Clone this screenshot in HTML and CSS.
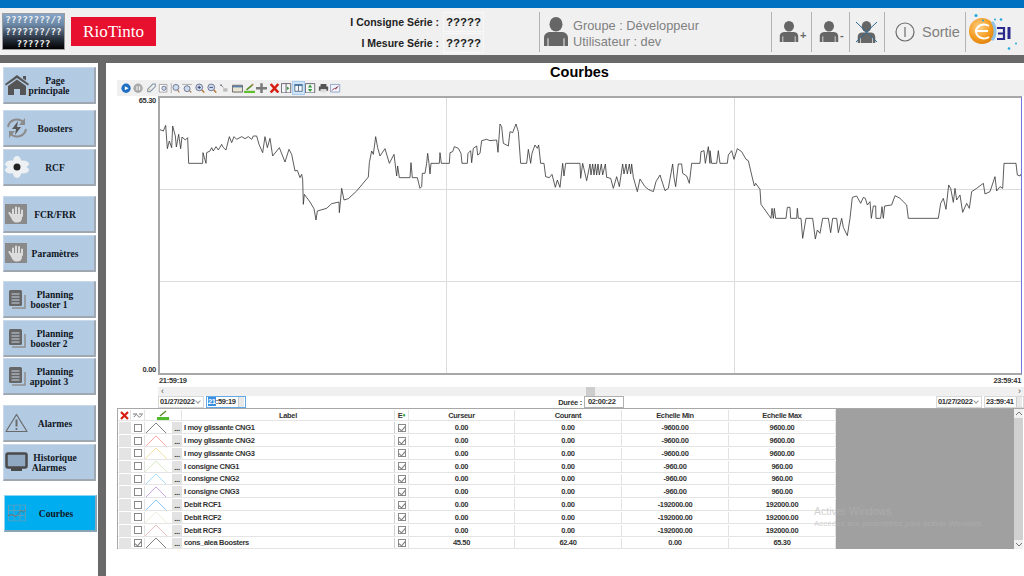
FILE: index.html
```html
<!DOCTYPE html>
<html lang="fr">
<head>
<meta charset="utf-8">
<title>Courbes</title>
<link rel="stylesheet" href="styles.css">
</head>
<body>
<svg class="defs" width="0" height="0" aria-hidden="true">
  <defs>
    <symbol id="person" viewBox="0 0 26 26" preserveAspectRatio="none">
      <circle cx="13" cy="6.500" r="6.500"/>
      <path d="M1 26v-7c0-4 3-5.500 7-5.500h10c4 0 7 1.500 7 5.500v7h-3.500v-7h-1v7h-15v-7h-1v7z"/>
    </symbol>
    <symbol id="hand" viewBox="0 0 22 20">
      <rect width="22" height="20" fill="#8a8a8a"/>
      <path fill="#dcdcdc" d="M6 10h11v4c0 3-2 4.500-5 4.500-3.500 0-4.500-1.500-6-5L3.500 9.500c-.6-1.300 1-2 1.800-1L7 11z"/>
      <path stroke="#dcdcdc" stroke-width="2" stroke-linecap="round" d="M8 11V5.500M11 11V3.500M14 11V4M17 12V6.500"/>
    </symbol>
    <symbol id="doc" viewBox="0 0 18 20">
      <path fill="none" stroke="#8f8f8f" stroke-width="1.500" d="M4 19h13V6"/>
      <rect x="1" y="1" width="13" height="16" rx="1.500" fill="#666"/>
      <path stroke="#c6d4e4" stroke-width="1.200" d="M3.500 5h8M3.500 8h8M3.500 11h8M3.500 14h8"/>
    </symbol>
    <symbol id="peak" viewBox="0 0 22 13" preserveAspectRatio="none">
      <path fill="none" stroke="currentColor" stroke-width=".8" d="M0 13 11 1l11 12"/>
    </symbol>
    <symbol id="chev" viewBox="0 0 8 5">
      <path fill="none" stroke="#777" d="M1 4l3-3 3 3"/>
    </symbol>
  </defs>
</svg>

<div class="topbar"></div>

<header class="header">
  <div class="lang">????????/?<br>???????/??<br>??????</div>
  <div class="riotinto">RioTinto</div>
  <div class="readouts">
    <div class="readout"><span class="readout-label">I Consigne Série :</span><span class="readout-value">?????</span></div>
    <div class="readout"><span class="readout-label">I Mesure Série :</span><span class="readout-value">?????</span></div>
  </div>
  <div class="user sep">
    <svg class="user-icon" width="26" height="29"><use href="#person" width="26" height="29"/></svg>
    <div class="user-text">Groupe : Développeur<br>Utilisateur : dev</div>
  </div>
  <div class="tool tool-add sep"><svg class="small-person" width="20" height="21"><use href="#person" width="20" height="21"/></svg><span class="sign">+</span></div>
  <div class="tool tool-rem sep"><svg class="small-person" width="20" height="21"><use href="#person" width="20" height="21"/></svg><span class="sign">-</span></div>
  <div class="tool tool-del sep">
    <svg width="21" height="24" viewBox="0 0 21 24"><use href="#person" class="gray-fill" x="1" y="1" width="19" height="22"/><path stroke="#2a6a96" stroke-width="1" d="M0 2l21 20M21 2 0 22"/></svg>
  </div>
  <div class="exit sep">
    <svg width="20" height="20" viewBox="0 0 20 20"><circle cx="10" cy="10" r="9" fill="none" stroke="#6b6b6b" stroke-width="1.200"/><path stroke="#6b6b6b" stroke-width="1.200" d="M10 5v10"/></svg>
    <span>Sortie</span>
  </div>
  <div class="edi sep">
    <svg width="58" height="44" viewBox="0 0 58 44">
      <defs><radialGradient id="orb" cx=".4" cy=".35" r=".75"><stop offset="0" stop-color="#ffd38a"/><stop offset=".6" stop-color="#f39a1f"/><stop offset="1" stop-color="#d97a08"/></radialGradient></defs>
      <circle cx="16" cy="21" r="13" fill="url(#orb)"/>
      <path fill="none" stroke="#fff" stroke-width="2" d="M23 16a8 7 0 1 0 0 11M9 21h13"/>
      <path fill="none" stroke="#8fc4e8" stroke-width="3" d="M26 12c4 4 4 14 0 18"/>
      <path fill="none" stroke="#2b2a8c" stroke-width="2.200" d="M31 18h7v11h-7M32 23.500h5"/>
      <path stroke="#2b2a8c" stroke-width="3" d="M43 17v12"/>
      <g fill="#21a6e0"><circle cx="10" cy="5.500" r="1.500"/><circle cx="17" cy="10.500" r="1"/><circle cx="29" cy="9.500" r="1"/><circle cx="35" cy="9.500" r="1.300"/><circle cx="43" cy="38.500" r="1.300"/><circle cx="50" cy="33.500" r="1"/></g>
    </svg>
  </div>
</header>

<div class="content">
  <nav class="sidebar">
    <a class="nav">
      <svg class="nav-icon" width="24" height="20" viewBox="0 0 24 20"><path fill="#555" d="M12 0 24 9l-1 1.500L12 3 1 10.500 0 9zM3 11l9-6.500 9 6.500v9h-6v-6H9v6H3zM18 1h3v4.500l-3-2z"/></svg>
      <span class="nav-text"><span>Page</span><span class="line2">principale</span></span>
    </a>
    <a class="nav gap-a">
      <svg class="nav-icon" width="24" height="22" viewBox="0 0 24 22"><path fill="none" stroke="#8b8b8b" stroke-width="2" d="M3 10a9 9 0 0 1 16-4M21 12a9 9 0 0 1-16 4"/><path fill="#8b8b8b" d="M20 1v7h-6zM4 21v-7h6z"/><path fill="#5a5a5a" d="M13 4 7 12h4l-1 6 6-8h-4z"/></svg>
      <span class="nav-text"><span>Boosters</span></span>
    </a>
    <a class="nav gap-b">
      <svg class="nav-icon" width="24" height="22" viewBox="0 0 24 22"><g fill="#eef1f4"><ellipse cx="12" cy="5" rx="4" ry="5"/><ellipse cx="12" cy="17" rx="4" ry="5"/><ellipse cx="6" cy="8" rx="6" ry="3.500"/><ellipse cx="18" cy="8" rx="6" ry="3.500"/><ellipse cx="6" cy="14" rx="6" ry="3.500"/><ellipse cx="18" cy="14" rx="6" ry="3.500"/></g><circle cx="12" cy="11" r="3.500" fill="#222"/></svg>
      <span class="nav-text"><span>RCF</span></span>
    </a>
    <a class="nav gap-c">
      <svg class="nav-icon" width="22" height="20"><use href="#hand" width="22" height="20"/></svg>
      <span class="nav-text"><span>FCR/FRR</span></span>
    </a>
    <a class="nav gap-b">
      <svg class="nav-icon" width="22" height="20"><use href="#hand" width="22" height="20"/></svg>
      <span class="nav-text"><span>Paramètres</span></span>
    </a>
    <a class="nav gap-d">
      <svg class="nav-icon doc-icon" width="18" height="20"><use href="#doc" width="18" height="20"/></svg>
      <span class="nav-text"><span>Planning</span><span class="line2">booster 1</span></span>
    </a>
    <a class="nav gap-b">
      <svg class="nav-icon doc-icon" width="18" height="20"><use href="#doc" width="18" height="20"/></svg>
      <span class="nav-text"><span>Planning</span><span class="line2">booster 2</span></span>
    </a>
    <a class="nav gap-e">
      <svg class="nav-icon doc-icon" width="18" height="20"><use href="#doc" width="18" height="20"/></svg>
      <span class="nav-text"><span>Planning</span><span class="line2">appoint 3</span></span>
    </a>
    <a class="nav gap-c">
      <svg class="nav-icon" width="23" height="19" viewBox="0 0 23 19"><path fill="none" stroke="#6a6a6a" stroke-width="1.200" stroke-linejoin="round" d="M11.500 1 22 18H1z"/><path stroke="#6a6a6a" stroke-width="2" d="M11.500 6v7"/><circle cx="11.500" cy="15.500" r="1.100" fill="#6a6a6a"/></svg>
      <span class="nav-text"><span>Alarmes</span></span>
    </a>
    <a class="nav gap-b">
      <svg class="nav-icon" width="23" height="20" viewBox="0 0 23 20"><rect x="1.500" y="1.500" width="20" height="14" rx="1.500" fill="#90a8c2" stroke="#4a4a4a" stroke-width="2.500"/><path fill="#4a4a4a" d="M6 16h11v3H6z"/></svg>
      <span class="nav-text"><span>Historique</span><span class="line2">Alarmes</span></span>
    </a>
    <a class="nav nav-active">
      <svg class="nav-icon curve-icon" width="18" height="17" viewBox="0 0 18 17"><path fill="none" stroke="#5f9dbd" stroke-width="1" d="M.5.500h17v16H.5zM6 .5v16M12 .5v16M.5 6h17M.5 11h17"/><path fill="none" stroke="#666" stroke-width=".8" d="M0 11l4-1 4 2 5-6 2 2 3-3"/></svg>
      <span class="nav-text"><span>Courbes</span></span>
    </a>
  </nav>

  <main class="main">
    <h1 class="title">Courbes</h1>
    <div class="toolbar">
      <svg viewBox="0 0 13 12"><circle cx="6" cy="6" r="5.500" fill="#1f6fc4"/><path fill="#fff" d="M4.500 3.500 9 6 4.500 8.500z"/></svg>
      <svg viewBox="0 0 13 12"><circle cx="6" cy="6" r="5.500" fill="#a9a9a9"/><path fill="#eee" d="M4 3.500h1.500v5H4zM7 3.500h1.500v5H7z"/></svg>
      <svg viewBox="0 0 13 12"><path fill="none" stroke="#7f93a8" stroke-width="1.200" d="M2 10h3l6-6V1H8L2 7z"/><path stroke="#d4a83a" d="M3 9l2-2"/></svg>
      <svg viewBox="0 0 13 12"><path fill="#fff" stroke="#9a9a9a" d="M1.500 1.500h9v9h-9z"/><circle cx="7" cy="6" r="2.500" fill="#cde" stroke="#668"/></svg>
      <svg viewBox="0 0 13 12"><path stroke="#a9a9a9" d="M1.500 0v12"/><circle cx="7" cy="5" r="3.500" fill="#cde" stroke="#668"/><path stroke="#a86" stroke-width="1.500" d="M9 8l2 3"/></svg>
      <svg viewBox="0 0 13 12"><path stroke="#a9a9a9" d="M0 1.500h12"/><circle cx="6" cy="6.500" r="3.500" fill="#cde" stroke="#668"/><path stroke="#a86" stroke-width="1.500" d="M9 9l2 2"/></svg>
      <svg viewBox="0 0 13 12"><circle cx="5" cy="5" r="4" fill="#cde" stroke="#668"/><path stroke="#b73" stroke-width="1.800" d="M8 8l3 3"/><path stroke="#336" d="M3 5h4M5 3v4"/></svg>
      <svg viewBox="0 0 13 12"><circle cx="5" cy="5" r="4" fill="#cde" stroke="#668"/><path stroke="#b73" stroke-width="1.800" d="M8 8l3 3"/><path stroke="#336" d="M3 5h4"/></svg>
      <svg viewBox="0 0 13 12"><path stroke="#667" d="M2 2l3 3M3 2H2v1"/><path fill="#bbb" d="M5 6h5v4H5z"/></svg>
      <svg viewBox="0 0 13 12"><path fill="#e8e4d4" stroke="#555" d="M.5 2.500h12v8H.5z"/><path fill="#5b7fa8" d="M1 3h11v2H1z"/></svg>
      <svg viewBox="0 0 13 12"><path fill="#5fbf2e" d="M0 9h13v3H0z"/><path stroke="#5a8f2a" stroke-width="1.800" d="M3 8 10 2"/><path stroke="#a85" stroke-width="1.500" d="M9 3l2-2"/></svg>
      <svg viewBox="0 0 13 12"><path fill="#7a7a7a" d="M5 0h3v4.500h5v3H8V12H5V7.500H0v-3h5z"/></svg>
      <svg viewBox="0 0 13 12"><path stroke="#d81e12" stroke-width="3" d="M2 1l9 10M11 1 2 11"/></svg>
      <svg viewBox="0 0 13 12"><path fill="#f4f4f4" stroke="#556" d="M.5.500h11v11H.5z"/><path stroke="#556" d="M6 .5v11"/><path fill="#3a9a3a" d="M7 4l3 2-3 2z"/></svg>
      <svg class="tool-on" viewBox="0 0 15 14"><path fill="#f4f8fc" stroke="#34506e" d="M2.500 2.500h10v9h-10z"/><path fill="#3d6fa0" d="M2 2h11v2H2z"/><path stroke="#34506e" d="M7.500 3v8"/></svg>
      <svg viewBox="0 0 13 12"><path fill="#f4f4f4" stroke="#556" d="M.5.500h11v11H.5z"/><path fill="#2f9a3a" d="M6 1.500 8.500 5h-5zM6 10.500 3.500 7h5z"/></svg>
      <svg viewBox="0 0 13 12"><path fill="#555" d="M3 1h7v3H3zM1 4h11v5H1z"/><path fill="#ddd" d="M3 7h7v4H3z"/></svg>
      <svg viewBox="0 0 13 12"><path fill="#eef2fa" stroke="#8a9cc4" d="M.5 1.500h11v9h-11z"/><path stroke="#d0627a" d="M2 9l3-3 2 1 3-4"/></svg>
    </div>

    <div class="chart-row">
      <div class="y-axis"><span>65.30</span><span>0.00</span></div>
      <div class="chart">
        <svg class="plot" width="861" height="275" viewBox="160 98 861 275" aria-hidden="true">
          <path class="grid" d="M159 189.500h862M159 281.500h862M446.500 97v277M734.500 97v277"/>
          <g transform="translate(110 76) scale(.33333)">
            <polyline class="trace" points="147,160 160,165 167,148 172,218 178,195 185,215 188,150 196,180 199,213 206,175 212,218 216,183 226,192 233,185 236,262 278,262 279,230 288,262 290,230 300,225 305,215 310,225 318,212 325,222 335,205 340,215 348,222 358,182 365,200 372,182 380,190 395,182 405,188 415,182 425,190 430,180 440,180 447,205 458,230 465,182 472,215 480,187 488,240 508,215 525,258 537,220 545,235 555,285 562,283 570,305 575,295 578,310 580,385 583,355 600,378 612,398 618,432 622,405 650,397 665,383 687,378 688,410 695,337 702,372 715,368 740,345 775,303 778,260 785,225 790,235 797,182 803,215 810,240 825,218 838,262 852,235 860,300 863,270 868,305 900,305"/>
          </g>
          <g transform="translate(400 90) scale(.33333)">
            <polyline class="trace" points="30,263 33,218 37,263 52,263 60,295 65,290 67,250 75,250 80,220 83,190 87,220 90,252 93,220 118,220 120,188 124,220 148,220 150,188 158,185 163,170 175,175 183,190 186,220 202,220 204,190 212,182 215,218 220,175 230,168 233,195 240,190 245,152 260,148 270,152 290,150 294,187 300,102 305,110 310,160 325,168 330,125 338,128 348,102 355,125 362,220 380,220 385,178 392,220 396,190 405,165 412,175 416,165 422,220 432,220 437,260 448,263 456,253 466,292 472,270 480,292 488,220 492,258 497,220 540,220 542,265 548,220 560,272 570,222 573,255 578,222 582,255 586,222 590,255 594,222 598,255 604,222 608,255 616,222 620,262 632,265 640,295 650,260 658,290 668,222 672,252 678,222 682,252 688,222 692,252 695,222 700,262 712,305 720,267 735,290 745,298 760,305 768,275 780,255 795,302 805,295 818,222 822,262 827,290 835,222 845,222 848,250 860,258 868,280 875,220 900,220 903,185 912,182 916,220 925,170 930,220"/>
          </g>
          <g transform="translate(710 90) scale(.33333)">
            <polyline class="trace" points="0,220 0,182 5,220 20,220 25,182 30,220 52,220 55,195 65,182 72,208 82,176 95,185 108,208 115,212 125,255 133,288 137,280 150,298 153,343 183,385 186,355 190,385 193,355 197,385 228,385 232,352 240,352 242,385 260,385 262,355 265,385 273,385 278,445 288,385 308,385 316,447 322,420 330,430 338,385 355,385 362,428 368,385 380,385 385,428 395,385 400,412 412,437 420,385 427,322 440,318 452,340 460,322 466,325 472,345 480,335 484,385 490,348 497,348 498,385 512,385 516,350 520,385 524,348 545,345 555,317 570,325 590,345 595,385 685,385 692,340 700,325 708,358 716,285 722,295 730,337 735,295 740,330 750,315 758,367 770,340 778,355 785,305 800,295 820,280 825,312 840,305 855,260 860,303 870,290 878,295 882,220 918,220 922,255 930,258 935,250"/>
          </g>
        </svg>
      </div>
    </div>

    <div class="times"><span>21:59:19</span><span>23:59:41</span></div>
    <div class="hscroll"><span class="arrow">‹</span><span class="thumb"></span><span class="arrow">›</span></div>

    <div class="dates">
      <div class="date-group">
        <span class="field date">01/27/2022<i class="chev"></i></span>
        <span class="field time focused"><span><mark class="sel">21</mark>:59:19</span><i class="spin"></i></span>
      </div>
      <div class="duration"><span>Durée :</span><span class="field dur">02:00:22</span></div>
      <div class="date-group">
        <span class="field date">01/27/2022<i class="chev"></i></span>
        <span class="field time"><span>23:59:41</span><i class="spin"></i></span>
      </div>
    </div>

    <section class="table-wrap">
      <div class="table">
        <div class="row head">
          <div class="c"><svg width="9" height="9" viewBox="0 0 9 9"><path stroke="#d81e12" stroke-width="2.200" d="M1 1l7 7M8 1 1 8"/></svg></div>
          <div class="c"><svg width="10" height="6" viewBox="0 0 10 6"><path fill="none" stroke="#777" d="M0 2h4M6 2h4M1 5c2-3 3-3 4-1s2 1 4-1"/></svg></div>
          <div class="c span2"><svg width="12" height="10" viewBox="0 0 12 10"><path fill="#4dbb2a" d="M0 7h12v3H0z"/><path stroke="#5a8f2a" stroke-width="1.500" d="M3 6l6-5"/></svg></div>
          <div class="c">Label</div>
          <div class="c e-h">E<b>♦</b></div>
          <div class="c">Curseur</div>
          <div class="c">Courant</div>
          <div class="c">Echelle Min</div>
          <div class="c">Echelle Max</div>
        </div>
        <div class="row">
          <div class="c"><i class="cell-btn"></i></div><div class="c"><i class="box"></i></div><div class="c peak-cell"><svg class="peak p0" width="22" height="12"><use href="#peak" width="22" height="12"/></svg></div><div class="c dots">...</div><div class="c label">I moy glissante CNG1</div><div class="c"><i class="box on"></i></div><div class="c">0.00</div><div class="c">0.00</div><div class="c">-9600.00</div><div class="c">9600.00</div>
        </div>
        <div class="row">
          <div class="c"><i class="cell-btn"></i></div><div class="c"><i class="box"></i></div><div class="c peak-cell"><svg class="peak p1" width="22" height="12"><use href="#peak" width="22" height="12"/></svg></div><div class="c dots">...</div><div class="c label">I moy glissante CNG2</div><div class="c"><i class="box on"></i></div><div class="c">0.00</div><div class="c">0.00</div><div class="c">-9600.00</div><div class="c">9600.00</div>
        </div>
        <div class="row">
          <div class="c"><i class="cell-btn"></i></div><div class="c"><i class="box"></i></div><div class="c peak-cell"><svg class="peak p2" width="22" height="12"><use href="#peak" width="22" height="12"/></svg></div><div class="c dots">...</div><div class="c label">I moy glissante CNG3</div><div class="c"><i class="box on"></i></div><div class="c">0.00</div><div class="c">0.00</div><div class="c">-9600.00</div><div class="c">9600.00</div>
        </div>
        <div class="row">
          <div class="c"><i class="cell-btn"></i></div><div class="c"><i class="box"></i></div><div class="c peak-cell"><svg class="peak p3" width="22" height="12"><use href="#peak" width="22" height="12"/></svg></div><div class="c dots">...</div><div class="c label">I consigne CNG1</div><div class="c"><i class="box on"></i></div><div class="c">0.00</div><div class="c">0.00</div><div class="c">-960.00</div><div class="c">960.00</div>
        </div>
        <div class="row">
          <div class="c"><i class="cell-btn"></i></div><div class="c"><i class="box"></i></div><div class="c peak-cell"><svg class="peak p4" width="22" height="12"><use href="#peak" width="22" height="12"/></svg></div><div class="c dots">...</div><div class="c label">I consigne CNG2</div><div class="c"><i class="box on"></i></div><div class="c">0.00</div><div class="c">0.00</div><div class="c">-960.00</div><div class="c">960.00</div>
        </div>
        <div class="row">
          <div class="c"><i class="cell-btn"></i></div><div class="c"><i class="box"></i></div><div class="c peak-cell"><svg class="peak p5" width="22" height="12"><use href="#peak" width="22" height="12"/></svg></div><div class="c dots">...</div><div class="c label">I consigne CNG3</div><div class="c"><i class="box on"></i></div><div class="c">0.00</div><div class="c">0.00</div><div class="c">-960.00</div><div class="c">960.00</div>
        </div>
        <div class="row">
          <div class="c"><i class="cell-btn"></i></div><div class="c"><i class="box"></i></div><div class="c peak-cell"><svg class="peak p6" width="22" height="12"><use href="#peak" width="22" height="12"/></svg></div><div class="c dots">...</div><div class="c label">Debit RCF1</div><div class="c"><i class="box on"></i></div><div class="c">0.00</div><div class="c">0.00</div><div class="c">-192000.00</div><div class="c">192000.00</div>
        </div>
        <div class="row">
          <div class="c"><i class="cell-btn"></i></div><div class="c"><i class="box"></i></div><div class="c peak-cell"><svg class="peak p7" width="22" height="12"><use href="#peak" width="22" height="12"/></svg></div><div class="c dots">...</div><div class="c label">Debit RCF2</div><div class="c"><i class="box on"></i></div><div class="c">0.00</div><div class="c">0.00</div><div class="c">-192000.00</div><div class="c">192000.00</div>
        </div>
        <div class="row">
          <div class="c"><i class="cell-btn"></i></div><div class="c"><i class="box"></i></div><div class="c peak-cell"><svg class="peak p8" width="22" height="12"><use href="#peak" width="22" height="12"/></svg></div><div class="c dots">...</div><div class="c label">Debit RCF3</div><div class="c"><i class="box on"></i></div><div class="c">0.00</div><div class="c">0.00</div><div class="c">-192000.00</div><div class="c">192000.00</div>
        </div>
        <div class="row">
          <div class="c"><i class="cell-btn"></i></div><div class="c"><i class="box on"></i></div><div class="c peak-cell"><svg class="peak p0" width="22" height="12"><use href="#peak" width="22" height="12"/></svg></div><div class="c dots">...</div><div class="c label">cons_alea Boosters</div><div class="c"><i class="box on"></i></div><div class="c">45.50</div><div class="c">62.40</div><div class="c">0.00</div><div class="c">65.30</div>
        </div>
      </div>
      <div class="empty"></div>
      <div class="vscroll">
        <svg class="v-arrow" width="8" height="5"><use href="#chev" width="8" height="5"/></svg>
        <span class="v-thumb"></span>
        <svg class="v-arrow v-down" width="8" height="5"><use href="#chev" width="8" height="5"/></svg>
      </div>
      <div class="watermark"><span class="wm1">Activer Windows</span><span class="wm2">Accédez aux paramètres pour activer Windows.</span></div>
    </section>
  </main>
</div>
</body>
</html>
```
FILE: styles.css
```css
* { box-sizing: border-box; }
html, body { margin: 0; height: 576px; overflow: hidden; }
body { font-family: "Liberation Sans", Arial, sans-serif; background: #fff; color: #111; display: flex; flex-direction: column; }
.defs { position: absolute; }

.topbar { height: 8px; background: #0070c0; flex: none; }

.header { height: 47px; flex: none; background: #f0f0f0; display: flex; align-items: center; position: relative; }
.lang { width: 63px; height: 37px; margin-left: 2px; background: linear-gradient(#85a5c9 0%, #6c88a6 30%, #2a3340 70%, #000 100%); border: 1px solid #9c9c9c; color: #f0f0f0; font-family: "DejaVu Sans Mono", monospace; font-size: 9.400px; font-weight: bold; line-height: 11.800px; text-align: center; overflow: hidden; white-space: nowrap; }
.riotinto { width: 85px; height: 29px; margin-left: 6px; background: #e8102f; color: #fff; font-family: "Liberation Serif", serif; font-size: 17px; display: flex; align-items: center; justify-content: center; }
.readouts { width: 328px; display: flex; flex-direction: column; align-items: flex-end; gap: 1px; padding-top: 2px; }
.readout { display: flex; align-items: center; height: 20px; }
.readout-label { font-size: 10.500px; font-weight: bold; color: #222; margin-right: 4px; }
.readout-value { width: 41px; height: 20px; border: 1px solid #f8f8f8; font-size: 11.500px; font-weight: bold; text-align: center; line-height: 18px; color: #222; }
.sep { height: 40px; border-left: 1px solid #b4b4b4; display: flex; align-items: center; }
.user { margin-left: 55px; width: 232px; padding-left: 3px; }
.user-icon { fill: #666; flex: none; }
.user-text { margin-left: 4px; padding-top: 4px; font-size: 12.800px; line-height: 16px; color: #808080; }
.tool { fill: #666; }
.tool-add { width: 40px; padding-left: 7px; }
.tool-rem { width: 38px; padding-left: 7px; }
.tool-del { width: 35px; padding-left: 6px; }
.gray-fill { fill: #666; }
.small-person { flex: none; }
.sign { font-size: 11px; font-weight: bold; color: #666; margin: 6px 0 0 1px; }
.exit { width: 81px; padding-left: 10px; gap: 7px; font-size: 14.500px; color: #808080; }
.edi { flex: 1; }

.content { flex: 1; display: flex; min-height: 0; border-top: 8px solid #696969; }
.sidebar { width: 106px; flex: none; border-right: 8px solid #696969; padding: 4px 0 0 3px; background: #fff; display: flex; flex-direction: column; }
.nav { width: 93px; height: 37px; flex: none; background: #b2cae2; border: 1px solid; border-color: #c9d9ea #9fa7b0 #9fa7b0 #c9d9ea; border-bottom-width: 2px; border-right-width: 2px; display: flex; align-items: center; position: relative; color: #10151c; font-family: "Liberation Serif", serif; font-weight: bold; font-size: 9.500px; line-height: 10px; }
.gap-a { margin-top: 6px; }
.gap-b { margin-top: 2px; }
.gap-c { margin-top: 10px; }
.gap-d { margin-top: 9px; }
.gap-e { margin-top: 1px; }
.nav-active { margin: 14px 0 0 1px; background: #00aeef; border-color: #8fd4ee #8aa5b5 #8aa5b5 #8fd4ee; }
.nav-icon { position: absolute; left: 1px; top: 50%; transform: translateY(-50%); }
.doc-icon { left: 4px; }
.curve-icon { left: 3px; }
.nav-text { width: 100%; padding: 2px 0 0 12px; display: flex; flex-direction: column; align-items: center; white-space: nowrap; }
.nav-text .line2 { margin-right: 12px; }

.main { flex: 1; min-width: 0; display: flex; flex-direction: column; padding-left: 11px; }
.title { margin: 2px 0 0; height: 15px; font-size: 14.500px; line-height: 15px; font-weight: bold; text-align: center; color: #000; padding-left: 18px; }
.toolbar { height: 16px; background: #f0f0f0; display: flex; align-items: center; padding-left: 4px; gap: 1.300px; }
.toolbar svg { flex: none; width: 11px; height: 10.500px; }
.toolbar .tool-on { background: #cfe4f7; outline: 1px solid #a9cdee; width: 11px; height: 12px; }

.chart-row { display: flex; height: 279px; }
.y-axis { width: 41px; flex: none; display: flex; flex-direction: column; justify-content: space-between; align-items: flex-end; padding-right: 2px; font-weight: bold; font-size: 7.500px; letter-spacing: -.3px; line-height: 10px; color: #333; }
.chart { width: 864px; flex: none; height: 279px; border: 1px solid #a8a8a8; border-width: 2px 1px 2px 2px; border-right-color: #7474e0; background: #fff; }
.plot { display: block; }
.grid { stroke: #dcdcdc; stroke-width: 1; fill: none; }
.trace { fill: none; stroke: #333; stroke-width: 2.400; stroke-linejoin: round; }

.times { height: 12px; display: flex; justify-content: space-between; margin-left: 41px; padding: 0 3px 0 1px; font-weight: bold; font-size: 7.500px; letter-spacing: -.3px; line-height: 12px; color: #333; }
.hscroll { height: 9px; margin-left: 41px; background: #f0f0f0; display: flex; justify-content: space-between; align-items: center; padding: 0 3px; position: relative; font-size: 9px; line-height: 9px; color: #555; }
.thumb { position: absolute; left: 428px; top: 0; width: 9px; height: 9px; background: #cdcdcd; }
.dates { height: 12px; margin-left: 41px; display: flex; align-items: center; justify-content: space-between; font-weight: bold; font-size: 7.500px; letter-spacing: -.3px; color: #333; }
.date-group { display: flex; gap: 2px; }
.field { height: 12px; border: 1px solid #d8d8d8; display: flex; align-items: center; justify-content: space-between; line-height: 10px; padding: 0 1px; background: #fff; white-space: nowrap; }
.date { width: 46px; }
.time { width: 40px; }
.focused { border-color: #62a8e6; }
.sel { background: #3a8fe0; color: #fff; }
.chev { width: 4px; height: 4px; border: solid #999; border-width: 0 1px 1px 0; transform: rotate(45deg); margin: 0 2px 2px 0; }
.spin { width: 6px; height: 10px; background: #e8e8e8; flex: none; border-left: 1px solid #ccc; }
.duration { display: flex; align-items: center; gap: 2px; }
.dur { width: 40px; justify-content: flex-start; padding-left: 3px; border-color: #b0b0b0; }

.table-wrap { display: flex; position: relative; align-items: flex-start; border-top: 1px solid #a8a8a8; height: 141px; flex: none; }
.table { width: 719px; flex: none; display: flex; flex-direction: column; font-size: 7.500px; letter-spacing: -.33px; font-weight: bold; color: #333; border-left: 1px solid #a8a8a8; }
.row { height: 12.800px; padding-top: 1px; display: grid; grid-template-columns: 13px 14px 27px 10px 213px 14px 106px 107px 107px 107px; border-bottom: 1px solid #e4e4e4; flex: none; }
.head { height: 12.400px; }
.c { display: flex; align-items: center; justify-content: center; border-right: 1px solid #e2e2e2; min-width: 0; overflow: hidden; white-space: nowrap; line-height: 11px; }
.span2 { grid-column: span 2; }
.peak-cell { justify-content: flex-start; border-right: 0; }
.label { justify-content: flex-start; padding-left: 2px; border-right-color: #cfcfcf; }
.e-h b { color: #2da52d; font-size: 6px; }
.cell-btn { width: 11px; height: 11px; background: #e4e4e4; }
.box { width: 8px; height: 8px; border: 1px solid #8a8a8a; background: #fff; position: relative; display: block; }
.box.on::after { content: ""; position: absolute; left: 1px; top: 0; width: 3px; height: 5px; border: solid #777; border-width: 0 1px 1px 0; transform: rotate(40deg); }
.dots { background: #e2e2e2; align-items: flex-end; line-height: 8px; font-size: 8px; border-right: 0; }
.peak { display: block; }
.p0 { color: #555; } .p1 { color: #f08a8a; } .p2 { color: #f5d48a; } .p3 { color: #cfe4b0; } .p4 { color: #8ad4f0; } .p5 { color: #b58ad8; } .p6 { color: #6ab0e8; } .p7 { color: #ece8d4; } .p8 { color: #e8a8a8; }

.empty { width: 178px; flex: none; height: 140px; background: #a0a0a0; }
.vscroll { width: 9px; height: 140px; flex: none; background: #f0f0f0; display: flex; flex-direction: column; align-items: center; padding-top: 2px; gap: 2px; }
.v-arrow { flex: none; }
.v-down { transform: rotate(180deg); margin-bottom: 2px; }
.v-thumb { flex: 1; background: #d0d0d0; width: 100%; }

.watermark { position: absolute; left: 697px; top: 96px; display: flex; flex-direction: column; color: rgba(180, 180, 180, .6); white-space: nowrap; pointer-events: none; }
.wm1 { font-size: 10.500px; line-height: 12px; }
.wm2 { font-size: 8px; line-height: 10px; margin-top: 2px; }
```
